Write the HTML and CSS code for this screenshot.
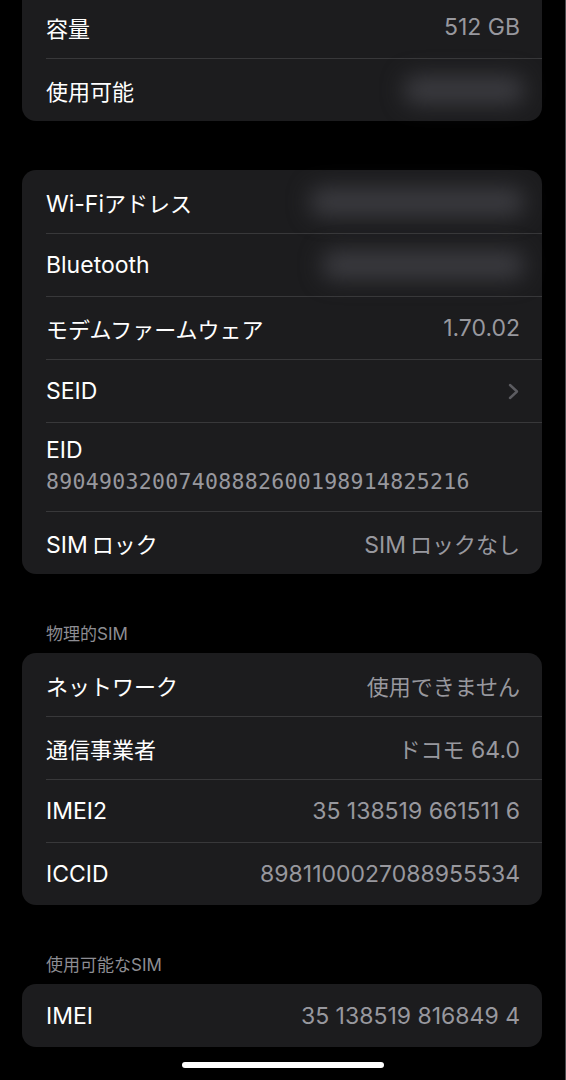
FILE: index.html
```html
<!DOCTYPE html>
<html lang="ja">
<head>
  <meta charset="UTF-8" />
  <meta name="viewport" content="width=device-width, initial-scale=1.0"/>
  <title>情報</title>
  <link rel="stylesheet" href="styles.css">
</head>
<body>
  <div class="screen">
    <div class="group first">
      <div class="row"><div class="cell"><span class="label ja">容量</span><span class="value">512 GB</span></div></div>
      <div class="row"><div class="cell"><span class="label ja">使用可能</span><span class="hidden-value short"></span></div></div>
    </div>

    <div class="group">
      <div class="row"><div class="cell"><span class="label">Wi-Fi<span class="ja">アドレス</span></span><span class="hidden-value wide"></span></div></div>
      <div class="row"><div class="cell"><span class="label">Bluetooth</span><span class="hidden-value mid"></span></div></div>
      <div class="row"><div class="cell"><span class="label ja">モデムファームウェア</span><span class="value">1.70.02</span></div></div>
      <div class="row"><div class="cell"><span class="label">SEID</span>
        <svg class="chevron" width="11" height="17" viewBox="0 0 11 17"><path d="M2 2l7 6.5L2 15" fill="none" stroke="#5c5c61" stroke-width="2.4" stroke-linecap="round" stroke-linejoin="round"/></svg>
      </div></div>
      <div class="row"><div class="cell stacked"><span class="label">EID</span><span class="mono">89049032007408882600198914825216</span></div></div>
      <div class="row"><div class="cell"><span class="label">SIM<span class="ja gap">ロック</span></span><span class="value">SIM<span class="ja gap">ロックなし</span></span></div></div>
    </div>

    <div class="section-title">物理的SIM</div>
    <div class="group">
      <div class="row"><div class="cell"><span class="label ja">ネットワーク</span><span class="value ja">使用できません</span></div></div>
      <div class="row"><div class="cell"><span class="label ja">通信事業者</span><span class="value"><span class="ja">ドコモ</span> 64.0</span></div></div>
      <div class="row"><div class="cell"><span class="label">IMEI2</span><span class="value">35 138519 661511 6</span></div></div>
      <div class="row"><div class="cell"><span class="label">ICCID</span><span class="value">8981100027088955534</span></div></div>
    </div>

    <div class="section-title">使用可能なSIM</div>
    <div class="group">
      <div class="row"><div class="cell"><span class="label">IMEI</span><span class="value">35 138519 816849 4</span></div></div>
    </div>

    <div class="home-bar"></div>
  </div>
</body>
</html>
```

FILE: styles.css
```css
html, body {
  margin: 0;
  padding: 0;
  background-color: #000;
}
body {
  font-family: 'Inter', 'Noto Sans CJK JP', sans-serif;
  color: #fff;
}
.screen {
  width: 566px;
  height: 1080px;
  overflow: hidden;
  box-sizing: border-box;
  border-right: 1px solid #4a4a4d;
}
.group {
  margin: 49px 23px 0 22px;
  background-color: #1c1c1e;
  border-radius: 14px;
}
.group.first {
  margin-top: -5px;
  border-radius: 0 0 14px 14px;
}
.row {
  padding-left: 24px;
}
.row + .row .cell {
  border-top: 1px solid #38383a;
}
.cell {
  display: flex;
  align-items: center;
  justify-content: space-between;
  height: 63px;
  box-sizing: border-box;
  padding-right: 22px;
}
.cell.stacked {
  flex-direction: column;
  align-items: flex-start;
  justify-content: flex-start;
  height: 89px;
  padding-top: 12px;
  line-height: 31px;
}
.label, .value {
  font-size: 23px;
}
.value {
  color: #98989e;
}
.ja {
  font-size: 22px;
}
.gap {
  margin-left: 4px;
}
.mono {
  font-family: 'DejaVu Sans Mono', monospace;
  font-size: 21.5px;
  color: #98989e;
  letter-spacing: 0.3px;
}
.hidden-value {
  display: block;
  height: 28px;
  margin-right: -4px;
  background-color: #3c3c41;
  border-radius: 12px;
  filter: blur(11px);
}
.hidden-value.short { width: 120px; }
.hidden-value.wide { width: 214px; }
.hidden-value.mid { width: 202px; }
.chevron {
  margin-right: 1px;
}
.section-title {
  margin: 50px 0 0 46px;
  font-size: 17px;
  line-height: 20px;
  color: #8d8d93;
}
.section-title + .group {
  margin-top: 9px;
}
.home-bar {
  width: 202px;
  height: 6px;
  margin: 15px auto 0;
  background-color: #fff;
  border-radius: 3px;
}
```
